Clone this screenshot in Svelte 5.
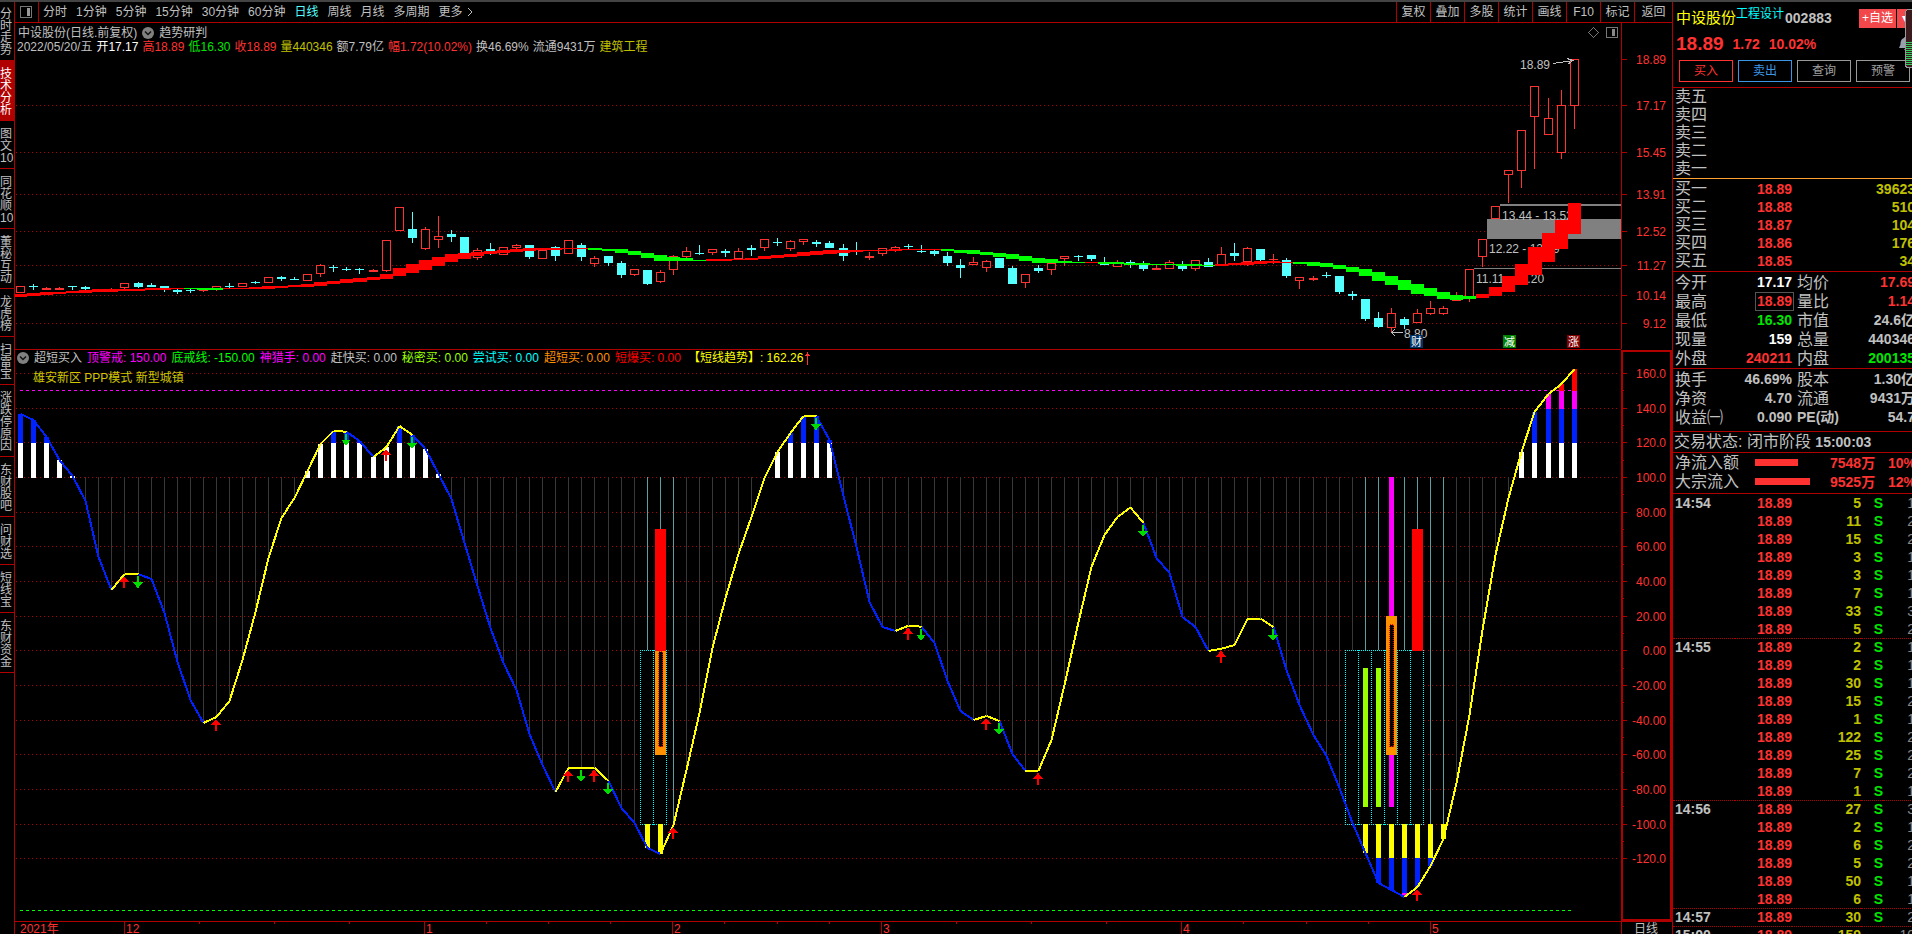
<script lang="ts">
  type Candle = [string, number, number, number, number]

  const STEP = 13.056

  // Left pixel of the column for trading day i.
  const col = (i: number) => 20 + Math.round(i * STEP)
  const level = (v: number) => Math.floor(650.8 - v * 1.734)

  const sideTabs = [
    ['分', '时', '走', '势'],
    ['技', '术', '分', '析'],
    ['图', '文', '10'],
    ['同', '花', '顺', '10'],
    ['董', '秘', '互', '动'],
    ['龙', '虎', '榜'],
    ['扫', '雷', '宝'],
    ['涨', '跌', '停', '原', '因'],
    ['东', '财', '股', '吧'],
    ['问', '财', '选'],
    ['短', '线', '宝'],
    ['东', '财', '资', '金'],
  ]
  let activeTab = $state(1)

  const periods = ['分时', '1分钟', '5分钟', '15分钟', '30分钟', '60分钟', '日线', '周线', '月线', '多周期', '更多']
  let period = $state('日线')
  const tools = ['复权', '叠加', '多股', '统计', '画线', 'F10', '标记', '返回']

  const ohlc = [
    ['white', '开17.17'],
    ['red', '高18.89'],
    ['green', '低16.30'],
    ['red', '收18.89'],
    ['gold', '量440346'],
    ['grey', '额7.79亿'],
    ['red', '幅1.72(10.02%)'],
    ['grey', '换46.69%'],
    ['grey', '流通9431万'],
    ['gold', '建筑工程'],
  ]

  const legend = [
    ['grey', '超短买入'],
    ['magenta', '顶警戒: 150.00'],
    ['lime', '底戒线: -150.00'],
    ['magenta', '神猎手: 0.00'],
    ['grey', '赶快买: 0.00'],
    ['spring', '秘密买: 0.00'],
    ['cyan', '尝试买: 0.00'],
    ['orange', '超短买: 0.00'],
    ['pure', '短爆买: 0.00'],
  ]

  const priceTicks: [number, string][] = [
    [59, '18.89'], [105, '17.17'], [152, '15.45'], [194, '13.91'],
    [231, '12.52'], [265, '11.27'], [295, '10.14'], [323, '9.12'],
  ]

  const levels = [160, 140, 120, 100, 80, 60, 40, 20, 0, -20, -40, -60, -80, -100, -120]
  function levelLabel(v: number): string {
    return Math.abs(v) >= 100 ? v.toFixed(1) : v.toFixed(2)
  }

  // colour, body top, body bottom, high, low
  const candles: Candle[] = [
    ['r', 286, 293, 286, 293], ['c', 286, 287, 284, 290], ['r', 288, 290, 287, 290], ['r', 288, 290, 287, 290],
    ['c', 286, 287, 286, 290], ['c', 287, 289, 286, 290], ['c', 289, 290, 289, 292], ['r', 289, 290, 288, 290],
    ['r', 283, 288, 283, 289], ['c', 283, 287, 282, 288], ['c', 285, 287, 283, 287], ['c', 286, 290, 286, 292],
    ['c', 290, 292, 288, 294], ['c', 290, 291, 288, 293], ['r', 290, 291, 289, 292], ['r', 286, 290, 286, 291],
    ['c', 286, 287, 283, 288], ['r', 283, 287, 283, 287], ['c', 282, 283, 281, 284], ['r', 277, 283, 277, 283],
    ['c', 277, 279, 276, 281], ['c', 279, 280, 277, 280], ['r', 274, 281, 274, 281], ['r', 265, 274, 264, 277],
    ['c', 267, 268, 265, 272], ['c', 269, 270, 267, 271], ['c', 269, 270, 268, 274], ['r', 270, 272, 269, 272],
    ['r', 240, 271, 240, 272], ['r', 207, 231, 207, 231], ['c', 229, 238, 212, 243], ['r', 229, 249, 227, 250],
    ['r', 236, 240, 216, 248], ['c', 234, 237, 230, 242], ['c', 237, 253, 237, 253], ['r', 250, 258, 248, 260],
    ['c', 249, 251, 243, 255], ['r', 247, 255, 247, 255], ['r', 245, 248, 244, 249], ['c', 245, 257, 245, 259],
    ['r', 250, 259, 250, 259], ['c', 247, 256, 246, 261], ['r', 240, 254, 240, 254], ['c', 245, 257, 243, 261],
    ['r', 258, 264, 256, 267], ['c', 256, 263, 256, 266], ['c', 263, 275, 261, 278], ['r', 269, 275, 269, 276],
    ['c', 270, 284, 270, 285], ['r', 272, 282, 270, 283], ['r', 256, 270, 255, 275], ['r', 251, 257, 247, 258],
    ['c', 253, 254, 245, 255], ['r', 249, 253, 249, 255], ['c', 251, 253, 249, 257], ['r', 251, 259, 248, 259],
    ['c', 248, 250, 245, 256], ['r', 239, 248, 239, 251], ['c', 242, 243, 238, 246], ['r', 241, 249, 240, 251],
    ['r', 239, 242, 239, 245], ['c', 242, 244, 240, 247], ['c', 243, 248, 241, 248], ['c', 248, 256, 244, 261],
    ['c', 250, 251, 242, 255], ['r', 256, 258, 252, 260], ['r', 248, 254, 248, 256], ['r', 247, 250, 246, 252],
    ['c', 246, 247, 244, 249], ['c', 251, 252, 245, 253], ['c', 251, 254, 249, 256], ['c', 256, 263, 252, 266],
    ['c', 265, 268, 259, 278], ['r', 262, 265, 257, 265], ['r', 261, 268, 260, 272], ['c', 258, 268, 258, 268],
    ['c', 268, 284, 266, 284], ['r', 274, 283, 274, 288], ['c', 268, 271, 265, 273], ['r', 263, 270, 263, 275],
    ['r', 256, 259, 256, 266], ['c', 256, 257, 255, 261], ['c', 255, 259, 255, 261], ['c', 263, 265, 257, 265],
    ['r', 263, 267, 260, 267], ['c', 262, 265, 260, 268], ['c', 264, 269, 261, 271], ['r', 268, 270, 265, 270],
    ['r', 262, 269, 260, 269], ['c', 264, 269, 261, 271], ['r', 260, 269, 260, 271], ['c', 262, 267, 258, 267],
    ['r', 254, 265, 247, 265], ['c', 253, 256, 243, 261], ['r', 248, 262, 247, 266], ['c', 249, 260, 249, 261],
    ['r', 259, 260, 254, 264], ['c', 260, 276, 258, 278], ['r', 277, 281, 277, 289], ['r', 278, 280, 276, 281],
    ['c', 275, 276, 272, 278], ['c', 276, 292, 276, 294], ['c', 294, 296, 291, 300], ['c', 299, 319, 299, 321],
    ['c', 318, 327, 312, 328], ['r', 313, 328, 308, 333], ['c', 319, 325, 317, 329], ['r', 313, 323, 309, 323],
    ['r', 308, 314, 301, 315], ['r', 308, 314, 306, 315], ['r', 296, 301, 292, 301], ['r', 269, 298, 269, 302],
    ['r', 239, 257, 239, 267], ['r', 206, 219, 206, 219], ['r', 170, 175, 170, 203], ['r', 130, 171, 130, 188],
    ['r', 86, 117, 86, 169], ['r', 118, 135, 98, 135], ['r', 105, 153, 90, 159], ['r', 59, 106, 59, 129],
  ]

  const ribbon = [
    [294, 297], [293, 296], [292, 295], [292, 294], [291, 293], [290, 293], [289, 292], [289, 292], [289, 291], [289, 291],
    [288, 290], [288, 290], [288, 289], [288, 289], [288, 290], [288, 290], [288, 289], [288, 289], [287, 289], [286, 289],
    [286, 288], [285, 287], [284, 287], [282, 286], [281, 284], [279, 283], [278, 282], [277, 280], [274, 279], [268, 276],
    [264, 273], [260, 270], [257, 266], [254, 262], [253, 259], [252, 256], [251, 254], [250, 253], [249, 252], [248, 251],
    [248, 250], [248, 250], [248, 249], [248, 249], [248, 250], [249, 251], [249, 253], [251, 255], [253, 258], [255, 261],
    [257, 261], [258, 261], [260, 261], [259, 261], [259, 261], [259, 260], [258, 260], [256, 259], [255, 258], [254, 257],
    [252, 256], [251, 255], [250, 254], [250, 253], [250, 252], [250, 251], [250, 251], [249, 251], [249, 250], [249, 250],
    [249, 250], [249, 251], [250, 253], [250, 254], [252, 255], [253, 257], [254, 259], [256, 261], [258, 263], [259, 263],
    [261, 263], [262, 263], [262, 263], [262, 264], [262, 264], [263, 265], [263, 265], [264, 265], [264, 265], [264, 266],
    [264, 266], [265, 266], [264, 266], [263, 265], [262, 265], [261, 264], [261, 263], [262, 263], [262, 264], [262, 266],
    [263, 267], [265, 269], [267, 272], [269, 276], [272, 281], [276, 285], [280, 290], [284, 294], [288, 296], [292, 299],
    [295, 300], [296, 299], [294, 298], [287, 296], [276, 292], [264, 285], [247, 275], [233, 262], [220, 249], [203, 234],
  ]
  const falling = [[13, 15], [44, 52], [71, 81], [83, 91], [98, 111]]
  const ribbonColor = (i: number) => (falling.some(([a, b]) => i >= a && i <= b) ? '#0f0' : '#f00')

  const trend = [
    414, 420, 437, 460, 476, 501, 557, 590, 574, 574.3, 579, 613, 662, 700, 723, 717, 701, 660, 612, 558,
    518, 498, 471, 444, 431, 431.7, 441, 457, 447, 426, 435, 449, 474, 499, 543, 586, 628, 663, 690, 734,
    765, 792, 768, 767.8, 767.6, 781, 808, 823, 848, 854, 825, 770, 713, 648, 598, 554, 517, 478, 452, 433,
    416, 416.3, 440, 496, 547, 602, 627, 631, 625.7, 626.7, 643, 681, 711, 720, 716, 721, 754, 771, 770.8, 740,
    685, 622, 567, 535, 517, 507.5, 523, 558, 573, 617, 627, 651, 648.7, 645, 618.8, 618.6, 627, 670, 705, 735,
    756, 788, 823, 853, 883, 890, 897, 887, 866, 839, 783, 715, 630, 555, 498, 452, 412, 394, 384, 369,
  ]

  // The line stays yellow for one bar after a peak.
  function isUp(i: number): boolean {
    return trend[i] <= trend[i - 1] || (i > 1 && trend[i - 1] < trend[i - 2])
  }

  const segments = trend.slice(1).map((y, k) => ({
    x1: col(k) + 0.5,
    y1: trend[k],
    x2: col(k + 1) + 0.5,
    y2: y,
    color: isUp(k + 1) ? '#ff0' : '#0022ff',
  }))

  const highZones = [
    [100, 120, '#fff'],
    [120, 140, '#0022ff'],
    [140, 150, '#f0f'],
    [150, 200, '#f00'],
  ] as [number, number, string][]
  const lowZones = [
    [-100, -120, '#ff0'],
    [-120, -140, '#0022ff'],
    [-140, -200, '#f0f'],
  ] as [number, number, string][]

  const bars = trend.flatMap((y, i) => [
    ...highZones
      .filter(([from]) => y < level(from))
      .map(([from, to, color]) => ({ i, y: Math.max(y, level(to)), end: level(from) + 1, color })),
    ...lowZones
      .filter(([from]) => y > level(from) + 1)
      .map(([from, to, color]) => ({ i, y: level(from), end: Math.min(y, level(to)), color })),
  ])

  const signals = [48, 49, 50, 103, 104, 105, 106, 107, 108, 109]
  // first and last day of each run of boxes
  const boxRuns = [[48, 49], [102, 107]]
  const upArrows = [8, 15, 28, 42, 44, 50, 68, 74, 78, 92, 107]
  const downArrows = [9, 25, 30, 43, 45, 61, 69, 75, 86, 96]

  function boxEdges(from: number, to: number): number[] {
    return Array.from({ length: to - from + 2 }, (_, k) => col(from + k) - 7)
  }

  const months: [number, string][] = [[124, '12'], [424, '1'], [672, '2'], [881, '3'], [1181, '4'], [1430, '5']]
  const weeks = [199, 274, 349, 486, 548, 610, 724, 777, 829, 956, 1031, 1106, 1243, 1306, 1368]

  const asks = ['卖五', '卖四', '卖三', '卖二', '卖一']
  const bids = [
    ['买一', '18.89', '39623'],
    ['买二', '18.88', '510'],
    ['买三', '18.87', '104'],
    ['买四', '18.86', '176'],
    ['买五', '18.85', '34'],
  ]
  const dayStats = [
    ['今开', '17.17', 'white', '均价', '17.69', 'red'],
    ['最高', '18.89', 'red boxed', '量比', '1.14', 'red'],
    ['最低', '16.30', 'green', '市值', '24.6亿', 'grey'],
    ['现量', '159', 'white', '总量', '440346', 'grey'],
    ['外盘', '240211', 'red', '内盘', '200135', 'green'],
  ]
  const baseStats = [
    ['换手', '46.69%', 'grey', '股本', '1.30亿', 'grey'],
    ['净资', '4.70', 'grey', '流通', '9431万', 'grey'],
    ['收益㈠', '0.090', 'grey', 'PE(动)', '54.7', 'grey'],
  ]
  const flows = [
    { name: '净流入额', width: 43, amount: '7548万', pct: '10%' },
    { name: '大宗流入', width: 55, amount: '9525万', pct: '12%' },
  ]
  const deals = [
    { time: '14:54', rows: [[5, 1], [11, 2], [15, 2], [3, 1], [3, 1], [7, 1], [33, 3], [5, 2]] },
    { time: '14:55', rows: [[2, 1], [2, 1], [30, 1], [15, 2], [1, 1], [122, 2], [25, 2], [7, 2], [1, 1]] },
    { time: '14:56', rows: [[27, 3], [2, 1], [6, 2], [5, 2], [50, 1], [6, 1]] },
    { time: '14:57', rows: [[30, 2]] },
    { time: '15:00', rows: [[159, 10]] },
  ]
</script>

{#snippet chevron()}
  <svg class="chevron" width="12" height="12" viewBox="0 0 12 12">
    <circle cx="6" cy="6" r="6" fill="#808080" />
    <path d="M3 4.5 6 7.5 9 4.5" fill="none" stroke="#111" stroke-width="1.5" />
  </svg>
{/snippet}

{#snippet paneIcon()}
  <svg width="12" height="12" viewBox="0 0 12 12">
    <rect x=".5" y=".5" width="11" height="11" rx="1" fill="none" stroke="#777" />
    <rect x="7" y="2" width="3" height="8" fill="#999" />
  </svg>
{/snippet}

{#snippet stats(rows: string[][])}
  <table class="quotes stats">
    <colgroup><col class="c1" /><col class="c2" /><col class="c3" /><col /></colgroup>
    <tbody>
      {#each rows as r}
        <tr>
          <th>{r[0]}</th>
          <td class={r[2]}><span>{r[1]}</span></td>
          <th class="second" class:latin={r[3].startsWith('PE')}>{r[3]}</th>
          <td class={r[5]}>{r[4]}</td>
        </tr>
      {/each}
    </tbody>
  </table>
{/snippet}

<div class="app">
  <nav class="side">
    {#each sideTabs as tab, i}
      <button class:active={i === activeTab} onclick={() => (activeTab = i)}>
        {#each tab as ch}<span>{ch}</span>{/each}
      </button>
    {/each}
  </nav>

  <main>
    <div class="toolbar">
      <button class="layout" aria-label="布局">{@render paneIcon()}</button>
      <div class="periods">
        {#each periods as p}
          <button class:current={p === period} onclick={() => (period = p)}>{p}</button>
        {/each}
        <svg class="more" width="6" height="10" viewBox="0 0 6 10">
          <path d="M1 1 5 5 1 9" fill="none" stroke="#c0c0c0" />
        </svg>
      </div>
      <div class="tools">
        {#each tools as t}<button>{t}</button>{/each}
      </div>
    </div>

    <div class="charts">
      <section class="pane">
        <svg viewBox="15 23 1606 326" preserveAspectRatio="xMinYMin meet">
          {#each priceTicks.slice(1) as [y]}
            <line class="grid" x1="16" x2="1618" y1={y + 0.5} y2={y + 0.5} />
          {/each}

          <rect x="1500" y="204" width="121" height="2" fill="#808080" />
          <rect x="1487" y="219" width="134" height="20" fill="#808080" />
          <rect x="1474" y="268" width="147" height="1" fill="#808080" />
          <text x="1502" y="220">13.44 - 13.53</text>
          <text x="1489" y="253">12.22 - 12.99</text>
          <text x="1476" y="283">11.11 - 11.20</text>

          {#each candles as [kind, top, bottom, high, low], i}
            {@const x = col(i)}
            <rect {x} y={high} width="1" height={low - high} fill={kind === 'r' ? '#ff3232' : '#54ffff'} />
            {#if kind === 'r' && bottom - top > 2}
              <rect x={x - 3.5} y={top + 0.5} width="8" height={bottom - top - 1} fill="#000" stroke="#ff3232" />
            {:else}
              <rect x={x - 4} y={top} width="9" height={bottom - top} fill={kind === 'r' ? '#ff3232' : '#54ffff'} />
            {/if}
          {/each}

          {#each ribbon as [top, bottom], i}
            <rect x={col(i) - 6} y={top} width={i < 119 ? col(i + 1) - col(i) : 13} height={bottom - top} fill={ribbonColor(i)} />
          {/each}

          <text x="1520" y="69">18.89</text>
          <path class="pointer" d="M1553 63.5 1573 60.5M1567 58.5 1573 60.5 1568 64" />
          <path class="pointer" d="M1403 332.5H1391.5M1395 329 1391.5 332.5 1395 336" />
          <text x="1404" y="338">8.80</text>

          <rect x="1410" y="335" width="13" height="13" fill="#003366" />
          <text class="mark" x="1411" y="346">财</text>
          <rect x="1503" y="335" width="13" height="13" fill="#008000" />
          <text class="mark" x="1504" y="346">减</text>
          <rect x="1567" y="335" width="13" height="13" fill="#800000" />
          <text class="mark" x="1568" y="346">涨</text>

          <path d="M1588.5 32.5 1593.5 27.5 1598.5 32.5 1593.5 37.5Z" fill="none" stroke="#777" />
          <rect x="1606.5" y="27.5" width="11" height="10" rx="1" fill="none" stroke="#777" />
          <rect x="1612" y="29" width="3" height="7" fill="#888" />
        </svg>
        <header>
          <div class="caption">
            <span>中设股份(日线.前复权)</span>
            {@render chevron()}
            <span>趋势研判</span>
          </div>
          <div class="ohlc">
            <span>2022/05/20/五</span>
            {#each ohlc as [color, text]}<span class={color}>{text}</span>{/each}
          </div>
        </header>
      </section>
      <svg class="axis" viewBox="1621 23 51 326">
        <rect x="1621" y="23" width="1" height="326" fill="#b00000" />
        {#each priceTicks as [y, label]}
          <rect x="1621" {y} width="6" height="1" fill="#b00000" />
          <text x="1666" y={y + 5}>{label}</text>
        {/each}
      </svg>

      <section class="pane lower">
        <svg viewBox="15 350 1606 571" preserveAspectRatio="xMinYMin meet">
          {#each levels as v}
            <line class="grid" x1="16" x2="1618" y1={level(v) + 0.5} y2={level(v) + 0.5} />
          {/each}
          <line x1="20" x2="1578" y1="390.5" y2="390.5" stroke="#f0f" stroke-dasharray="3 3" />
          <line x1="20" x2="1572" y1="910.5" y2="910.5" stroke="#0f0" stroke-dasharray="3 3" />

          {#each trend as y, i}
            {#if y > 477}
              <rect x={col(i)} y="477" width="1" height={Math.min(y, 824) - 477} fill={signals.includes(i) ? '#5f9ea0' : '#383838'} />
            {/if}
          {/each}

          {#each boxRuns as [from, to]}
            {@const edges = boxEdges(from, to)}
            {@const last = edges[edges.length - 1]}
            <rect x={edges[0]} y="650" width={last - edges[0]} height="174" fill="#000" />
            {#each edges as x}
              <line class="dotted" x1={x + 0.5} x2={x + 0.5} y1="650" y2="825" stroke="#0ff" />
            {/each}
            <line class="dotted" x1={edges[0]} x2={last} y1="650.5" y2="650.5" stroke="#0ff" />
            <line class="dotted" x1={edges[0]} x2={last} y1="824.5" y2="824.5" stroke="#0ff" />
          {/each}

          {#each bars as b}
            <rect x={col(b.i) - 2} y={b.y} width="5" height={b.end - b.y} fill={b.color} />
          {/each}

          <rect x={col(103) - 2} y="668" width="5" height="139" fill="#99ff00" />
          <rect x={col(104) - 2} y="668" width="5" height="139" fill="#99ff00" />
          <rect x={col(105) - 2} y="477" width="5" height="330" fill="#f0f" />
          {#each [[49, 643], [105, 616]] as [i, top]}
            <rect x={col(i) - 5} y={top} width="11" height={755 - top} fill="#ff9000" />
            <rect class="dotted" x={col(i) - 1.5} y={top + 8.5} width="4" height={747 - top - 9} stroke="#f00" />
          {/each}
          <rect x={col(49) - 5} y="529" width="11" height="122" fill="#f00" />
          <rect x={col(107) - 5} y="529" width="11" height="122" fill="#f00" />

          {#each segments as s}
            <line x1={s.x1} y1={s.y1} x2={s.x2} y2={s.y2} stroke={s.color} stroke-width="2" />
          {/each}

          {#each upArrows as i}
            <path d="M{col(i)} {trend[i] + 2}l5 6h-4v6h-2v-6h-4z" fill="#f00" />
          {/each}
          {#each downArrows as i}
            <path d="M{col(i)} {trend[i] + 14}l5 -6h-4v-6h-2v6h-4z" fill="#00dc00" />
          {/each}
        </svg>
        <header>
          <div class="legend">
            {@render chevron()}
            {#each legend as [color, text]}<span class={color}>{text}</span>{/each}
            <span class="yellow trend">
              【短线趋势】: 162.26
              <svg width="5" height="13" viewBox="0 0 5 13">
                <path d="M2 0h1v2h1v1h1v1H3v9H2V4H0V3h1V2h1z" fill="#ff3232" />
              </svg>
            </span>
          </div>
          <div class="sectors">雄安新区 PPP模式 新型城镇</div>
        </header>
      </section>
      <svg class="axis" viewBox="1621 349 51 572" preserveAspectRatio="xMinYMin meet">
        <rect x="1622" y="351" width="49" height="569" fill="none" stroke="#b00000" stroke-width="2" />
        {#each levels as v}
          <rect x="1621" y={level(v)} width="6" height="1" fill="#b00000" />
          {#if v < 160}
            <rect x="1621" y={level(v + 10)} width="3" height="1" fill="#b00000" />
          {/if}
          <text x="1666" y={level(v) + 5}>{levelLabel(v)}</text>
        {/each}
      </svg>

      <svg class="timeline" viewBox="15 921 1606 13" preserveAspectRatio="xMinYMin meet">
        <rect x="15" y="921" width="1606" height="1" fill="#b00000" />
        <text x="20" y="933">2021年</text>
        {#each months as [x, label]}
          <rect {x} y="921" width="1" height="13" fill="#b00000" />
          <text x={x + 2} y="933">{label}</text>
        {/each}
        {#each weeks as x}
          <rect {x} y="921" width="1" height="3" fill="#b00000" />
        {/each}
      </svg>
      <div class="unit">日线</div>
    </div>
  </main>

  <aside class="panel">
    <div class="head">
      <div class="name">
        <h1>中设股份</h1>
        <a class="industry" href="#industry">工程设计</a>
        <b>002883</b>
        <button class="add">+自选</button>
        <button class="drop" aria-label="自选分组">▾</button>
      </div>
      <div class="last">
        <strong>18.89</strong>
        <b>1.72</b>
        <b>10.02%</b>
        <svg class="bell" width="13" height="14" viewBox="0 0 13 14">
          <path d="M6 0a1 1 0 0 1 1 1c3 1 3.500 4 3.500 6.500L13 11H0l1.500-3.500C1.500 5 2 2 5 1a1 1 0 0 1 1-1z" fill="#98a0b0" />
          <path d="M5 12h3l-1.500 2z" fill="#98a0b0" />
        </svg>
      </div>
      <div class="trade">
        <button class="buy">买入</button>
        <button class="sell">卖出</button>
        <button>查询</button>
        <button>预警</button>
      </div>
      <svg class="meter" width="7" height="60" viewBox="0 0 7 60">
        <rect x=".5" y=".5" width="12" height="58" rx="3" fill="#3a1a1c" stroke="#999" />
        <path d="M4 33V57" stroke="#30d060" stroke-width="6" stroke-dasharray="1 1" />
      </svg>
    </div>

    <table class="quotes asks">
      <tbody>
        {#each asks as a}<tr><th>{a}</th></tr>{/each}
      </tbody>
    </table>
    <table class="quotes bids">
      <colgroup><col class="c1" /><col class="c2" /><col /></colgroup>
      <tbody>
        {#each bids as [name, price, volume]}
          <tr><th>{name}</th><td class="red">{price}</td><td class="gold">{volume}</td></tr>
        {/each}
      </tbody>
    </table>
    {@render stats(dayStats)}
    {@render stats(baseStats)}
    <p class="status">交易状态: 闭市阶段 <b>15:00:03</b></p>
    <div class="flows">
      {#each flows as f}
        <div class="flow">
          <span class="label">{f.name}</span>
          <span class="track"><i style="width: {f.width}px"></i></span>
          <b class="amount">{f.amount}</b>
          <b>{f.pct}</b>
        </div>
      {/each}
    </div>
    <table class="deals">
      <colgroup><col class="c1" /><col class="c2" /><col class="vol" /><col class="dir" /><col /></colgroup>
      {#each deals as d}
        <tbody>
          {#each d.rows as [volume, count], i}
            <tr>
              <td class="time">{i === 0 ? d.time : ''}</td>
              <td class="red">18.89</td>
              <td class="gold">{volume}</td>
              <td class="green">{d.time === '15:00' ? '' : 'S'}</td>
              <td class="count">{count}</td>
            </tr>
          {/each}
        </tbody>
      {/each}
    </table>
  </aside>
</div>

<style>
  :global(body) {
    background: #000;
    overflow: hidden;
  }
  .app {
    display: flex;
    height: 100vh;
    overflow: hidden;
    box-sizing: border-box;
    border-top: 2px solid #444;
    background: #000;
    color: #c0c0c0;
    font: 12px/14px 'Liberation Sans', 'Noto Sans CJK SC', sans-serif;
  }
  button {
    padding: 0;
    border: none;
    background: none;
    color: inherit;
    font: inherit;
    cursor: pointer;
  }
  svg {
    display: block;
    shape-rendering: crispEdges;
  }
  .chevron,
  .more,
  .bell {
    shape-rendering: auto;
  }

  .white { color: #fff; }
  .red { color: #ff3232; }
  .pure { color: #f00; }
  .green { color: #00e600; }
  .lime { color: #0f0; }
  .spring { color: #9f0; }
  .gold { color: #c0c000; }
  .yellow { color: #ff0; }
  .grey { color: #c0c0c0; }
  .magenta { color: #f0f; }
  .cyan { color: #0ff; }
  .orange { color: #ff9000; }

  .side {
    width: 14px;
    flex-shrink: 0;
    border-right: 1px solid #b00000;
    display: flex;
    flex-direction: column;
  }
  .side button {
    display: flex;
    flex-direction: column;
    align-items: flex-start;
    padding: 7px 0 4px;
    border-bottom: 1px solid #b00000;
    line-height: 12px;
  }
  .side button:first-child {
    padding-top: 6px;
  }
  .side .active {
    background: #b00000;
    color: #fff;
  }

  main {
    flex: 1;
    min-width: 0;
    display: flex;
    flex-direction: column;
  }
  .toolbar {
    display: flex;
    height: 20px;
    border-bottom: 1px solid #b00000;
  }
  .layout {
    width: 24px;
    padding-left: 5px;
    border-right: 1px solid #b00000;
  }
  .periods {
    display: flex;
    align-items: center;
    gap: 9px;
    padding-left: 4px;
  }
  .current {
    color: #54ffff;
  }
  .more {
    margin-left: -5px;
  }
  .tools {
    display: flex;
    margin-left: auto;
  }
  .tools button {
    width: 34px;
    border-left: 1px solid #b00000;
    box-sizing: border-box;
  }
  .tools button:last-child {
    width: 38px;
  }

  .charts {
    flex: 1;
    display: grid;
    grid-template-columns: minmax(0, 1fr) 51px;
    grid-template-rows: 326px minmax(0, 1fr) 13px;
  }
  .pane {
    display: grid;
    min-height: 0;
  }
  .pane > svg,
  .pane > header {
    grid-area: 1 / 1;
  }
  .pane > header {
    padding-top: 1px;
  }
  .pane > svg,
  .axis,
  .timeline {
    width: 100%;
    height: 100%;
    min-height: 0;
  }
  .lower {
    border-top: 1px solid #b00000;
  }
  .charts text {
    fill: #c0c0c0;
  }
  .charts .mark {
    fill: #fff;
    font-size: 11px;
  }
  .charts .axis text {
    fill: #ff3232;
    text-anchor: end;
  }
  .charts .timeline text {
    fill: #ff3232;
  }
  .grid {
    stroke: #b00000;
    stroke-dasharray: 1 3;
  }
  .dotted {
    fill: #000;
    stroke-dasharray: 1 1;
  }
  .pointer {
    fill: none;
    stroke: #c0c0c0;
  }
  .caption {
    display: flex;
    align-items: center;
    gap: 5px;
    padding: 2px 0 0 3px;
  }
  .ohlc {
    display: flex;
    gap: 4px;
    padding-left: 2px;
  }
  .legend {
    display: flex;
    align-items: center;
    gap: 5px;
    padding-left: 2px;
  }
  .trend {
    display: flex;
    align-items: center;
    gap: 2px;
    margin-left: 2px;
  }
  .sectors {
    padding: 6px 0 0 18px;
    color: #d0c800;
  }
  .unit {
    border: solid #b00000;
    border-width: 1px 0 0 1px;
    box-sizing: border-box;
    padding-left: 12px;
    overflow: hidden;
  }

  .panel {
    width: 240px;
    flex-shrink: 0;
    box-sizing: border-box;
    border-left: 1px solid #b00000;
    overflow: hidden;
    font-size: 14px;
  }
  .head {
    position: relative;
    height: 85px;
    border-bottom: 1px solid #b00000;
  }
  .name {
    display: flex;
    align-items: center;
    height: 32px;
    padding-left: 3px;
  }
  h1 {
    margin: 0;
    font-size: 15px;
    font-weight: normal;
    line-height: 20px;
    color: #ff0;
  }
  .industry {
    margin-bottom: 8px;
    font-size: 12px;
    color: #0ff;
    text-decoration: none;
  }
  .name b {
    margin-left: 1px;
  }
  .add,
  .drop {
    height: 19px;
    background: #f2484b;
    color: #fff;
    font-size: 12px;
  }
  .add {
    width: 37px;
    margin-left: auto;
  }
  .drop {
    width: 15px;
    margin-left: 1px;
  }
  .last {
    display: flex;
    align-items: center;
    gap: 9px;
    height: 20px;
    padding-left: 3px;
    color: #ff3232;
  }
  .last strong {
    font-size: 19px;
  }
  .bell {
    margin-left: auto;
  }
  .trade {
    display: flex;
    gap: 5px;
    padding: 6px 0 0 6px;
  }
  .trade button {
    width: 54px;
    height: 22px;
    flex-shrink: 0;
    box-sizing: border-box;
    border: 1px solid #999;
    color: #a0a0a0;
    font-size: 12px;
  }
  .trade .buy {
    border-color: #ff3232;
    color: #ff3232;
  }
  .trade .sell {
    border-color: #3c96e6;
    color: #3c96e6;
  }
  .meter {
    position: absolute;
    right: 0;
    top: 7px;
  }

  table {
    width: calc(100% + 3px);
    table-layout: fixed;
    border-spacing: 0;
    line-height: 18px;
  }
  th,
  td {
    padding: 0;
    height: 18px;
    white-space: nowrap;
  }
  th {
    padding-left: 2px;
    font-size: 16px;
    font-weight: normal;
    text-align: left;
  }
  td {
    text-align: right;
    font-weight: bold;
  }
  .c1 { width: 62px; }
  .c2 { width: 57px; }
  .c3 { width: 50px; }
  .vol { width: 69px; }
  .dir { width: 22px; }
  .asks {
    border-bottom: 1px solid #ffa030;
  }
  .bids {
    margin: 1px 0;
  }
  .stats {
    border-top: 1px solid #b00000;
    padding-top: 1px;
    line-height: 19px;
  }
  .stats th,
  .stats td {
    height: 19px;
  }
  .stats .second {
    padding-left: 5px;
  }
  .stats .latin {
    font-size: 14px;
    font-weight: bold;
  }
  .boxed span {
    outline: 1px solid #555;
    outline-offset: 1px;
    display: inline-block;
    line-height: 15px;
  }
  .status {
    margin: 4px 0 0;
    padding-left: 1px;
    border-top: 1px solid #b00000;
    font-size: 16px;
    line-height: 19px;
  }
  .status b {
    font-size: 14px;
  }
  .flows {
    border: solid #b00000;
    border-width: 1px 0;
    padding-bottom: 2px;
  }
  .flow {
    display: flex;
    align-items: center;
    width: calc(100% + 4px);
    height: 19px;
    color: #ff3232;
  }
  .label {
    width: 80px;
    padding-left: 2px;
    color: #c0c0c0;
    font-size: 16px;
  }
  .track {
    width: 75px;
  }
  .track i {
    display: block;
    height: 7px;
    background: #ff3232;
  }
  .amount {
    margin-right: auto;
  }
  .deals {
    border-collapse: collapse;
  }
  .deals tbody + tbody {
    border-top: 1px dotted #b00000;
  }
  .deals tbody + tbody tr:first-child td {
    height: 17px;
    line-height: 17px;
  }
  .deals .time {
    padding-left: 2px;
    text-align: left;
  }
  .deals .count {
    color: #888;
    font-weight: normal;
  }
</style>
